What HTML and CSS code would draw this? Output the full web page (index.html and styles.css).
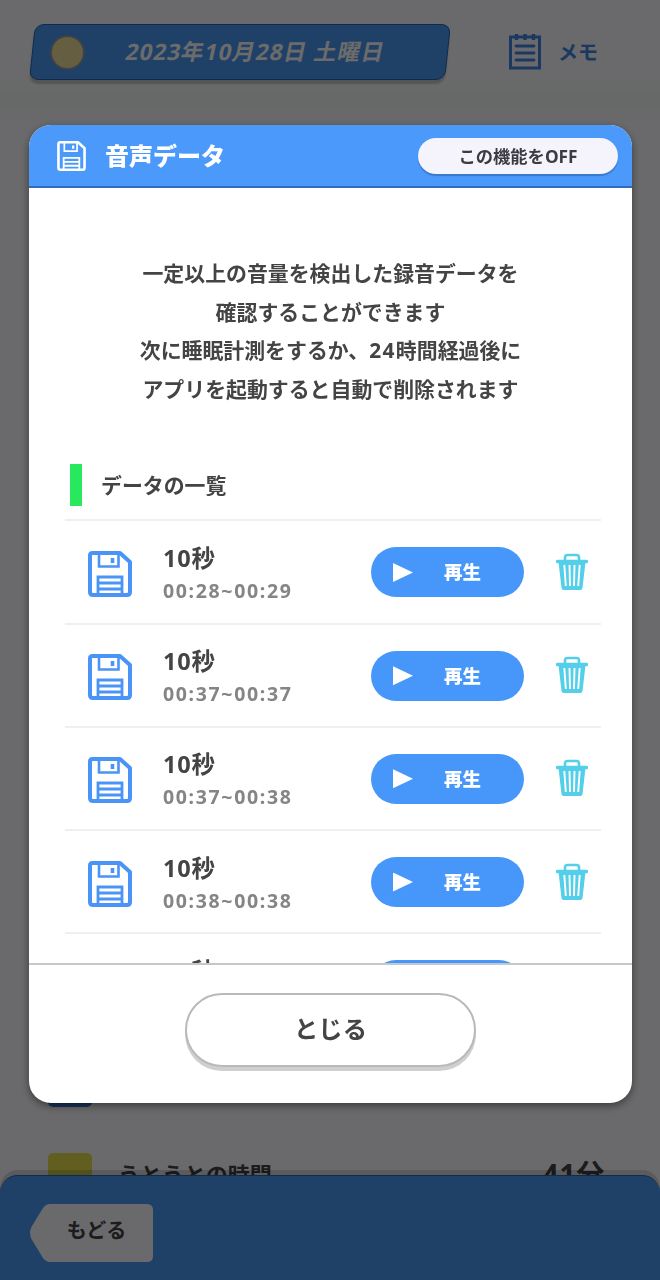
FILE: index.html
```html
<!DOCTYPE html>
<html lang="ja">
<head>
    <meta charset="UTF-8">
    <meta name="viewport" content="width=device-width, initial-scale=1.0">
    <title>音声データ</title>
    <link rel="stylesheet" href="styles.css">
</head>
<body>
    <svg class="symbols" aria-hidden="true">
        <symbol id="icon-floppy" viewBox="0 0 44 46">
            <path d="M4.500 2H32L42 11V41Q42 44 39 44H5Q2 44 2 41V4.500Q2 2 4.500 2Z" fill="none" stroke="currentColor" stroke-width="4" stroke-linejoin="round"/>
            <path d="M11 3V15.500H30.500V3" fill="none" stroke="currentColor" stroke-width="2.600"/>
            <path d="M24.500 7V12" stroke="currentColor" stroke-width="3.600"/>
            <path d="M10 43V26H34V43M10 32H34M10 38H34" fill="none" stroke="currentColor" stroke-width="2.800"/>
        </symbol>
        <symbol id="icon-trash" viewBox="0 0 32 38">
            <path d="M9 8V4.500Q9 2 11.500 2H20.500Q23 2 23 4.500V8" fill="none" stroke="currentColor" stroke-width="2.600"/>
            <path d="M1.500 8.500H30.500" stroke="currentColor" stroke-width="3.400" stroke-linecap="round"/>
            <path d="M2.500 9H29.500L26.500 35Q26.300 37 24.300 37H7.700Q5.700 37 5.500 35Z" fill="currentColor"/>
            <path d="M8.300 12L9.800 33M13.500 12L14 33M18.500 12L18 33M23.700 12L22.200 33" stroke="#fff" stroke-width="1.900"/>
        </symbol>
    </svg>

    <div class="screen">
        <header class="top-bar">
            <div class="date-plate">
                <span class="sun"></span>
                <span class="date">2023年10月28日 土曜日</span>
            </div>
            <div class="memo">
                <svg width="32" height="37" viewBox="0 0 32 37" fill="none" stroke="currentColor">
                    <path d="M1.500 4H30.500V35H1.500Z" stroke-width="3"/>
                    <path d="M7.500 1V7M16 1V7M24.500 1V7" stroke-width="3.400"/>
                    <path d="M7 13H25M7 20H25M7 27H25" stroke-width="2.800" stroke-linecap="round"/>
                </svg>
                <span>メモ</span>
            </div>
        </header>

        <main class="stats">
            <div class="stat-row">
                <span class="stat-mark blue"></span>
            </div>
            <div class="stat-row">
                <span class="stat-mark yellow"></span>
                <span class="stat-name">うとうとの時間</span>
                <span class="stat-value">41分</span>
            </div>
        </main>

        <footer class="bottom-bar">
            <button class="back-button">
                <svg width="125" height="60" viewBox="0 0 125 60">
                    <path d="M21 1H118Q124 1 124 7V53Q124 59 118 59H21Q17 59 14 55L3 37Q-1 30 3 23L14 5Q17 1 21 1Z" fill="currentColor"/>
                </svg>
                <span>もどる</span>
            </button>
        </footer>
    </div>

    <div class="overlay">
        <div class="modal" role="dialog">
            <div class="modal-header">
                <svg class="header-icon"><use href="#icon-floppy"/></svg>
                <h2>音声データ</h2>
                <button class="off-button">この機能をOFF</button>
            </div>

            <div class="modal-body">
                <p class="description">
                    一定以上の音量を検出した録音データを<br>
                    確認することができます<br>
                    次に睡眠計測をするか、<span class="num">24</span>時間経過後に<br>
                    アプリを起動すると自動で削除されます
                </p>

                <h3 class="list-title">データの一覧</h3>

                <ul class="data-list">
                    <li class="data-item">
                        <svg class="data-icon"><use href="#icon-floppy"/></svg>
                        <div class="data-info">
                            <div class="length">10秒</div>
                            <div class="time">00:28~00:29</div>
                        </div>
                        <button class="play-button"><i class="play-mark"></i><span>再生</span></button>
                        <svg class="trash-icon"><use href="#icon-trash"/></svg>
                    </li>
                    <li class="data-item">
                        <svg class="data-icon"><use href="#icon-floppy"/></svg>
                        <div class="data-info">
                            <div class="length">10秒</div>
                            <div class="time">00:37~00:37</div>
                        </div>
                        <button class="play-button"><i class="play-mark"></i><span>再生</span></button>
                        <svg class="trash-icon"><use href="#icon-trash"/></svg>
                    </li>
                    <li class="data-item">
                        <svg class="data-icon"><use href="#icon-floppy"/></svg>
                        <div class="data-info">
                            <div class="length">10秒</div>
                            <div class="time">00:37~00:38</div>
                        </div>
                        <button class="play-button"><i class="play-mark"></i><span>再生</span></button>
                        <svg class="trash-icon"><use href="#icon-trash"/></svg>
                    </li>
                    <li class="data-item">
                        <svg class="data-icon"><use href="#icon-floppy"/></svg>
                        <div class="data-info">
                            <div class="length">10秒</div>
                            <div class="time">00:38~00:38</div>
                        </div>
                        <button class="play-button"><i class="play-mark"></i><span>再生</span></button>
                        <svg class="trash-icon"><use href="#icon-trash"/></svg>
                    </li>
                    <li class="data-item">
                        <svg class="data-icon"><use href="#icon-floppy"/></svg>
                        <div class="data-info">
                            <div class="length">10秒</div>
                        </div>
                        <button class="play-button"><i class="play-mark"></i></button>
                        <svg class="trash-icon"><use href="#icon-trash"/></svg>
                    </li>
                </ul>
            </div>

            <div class="modal-footer">
                <button class="close-button">とじる</button>
            </div>
        </div>
    </div>
</body>
</html>
```

FILE: styles.css
```css
* {
    box-sizing: border-box;
}
body {
    margin: 0;
    font-family: "Noto Sans", "Noto Sans CJK JP", sans-serif;
    font-weight: bold;
    color: #444;
}
h2, h3, p, ul {
    margin: 0;
    padding: 0;
}
button {
    font: inherit;
    color: inherit;
    border: none;
    padding: 0;
    cursor: pointer;
}
svg {
    flex-shrink: 0;
}
.symbols {
    display: none;
}

/* 背面の画面 */
.screen {
    height: 1280px;
    display: flex;
    flex-direction: column;
    overflow: hidden;
    background: #fdfbff;
}
.top-bar {
    display: flex;
    align-items: flex-start;
    height: 125px;
    padding: 24px 0 0 32px;
    background: linear-gradient(#fdfbff 60%, #f4faf9 80%, #fdfbff 100%);
}
.date-plate {
    display: flex;
    align-items: center;
    width: 416px;
    height: 56px;
    padding-left: 19px;
    background: #4a99f5;
    border: 1px solid #2667b4;
    border-radius: 9px;
    box-shadow: 0 4px 2px #c8c8cc;
    transform: skewX(-6deg);
}
.sun {
    width: 31px;
    height: 31px;
    border-radius: 50%;
    background: #f2df9c;
    box-shadow: 0 0 3px 1px #c9a57a;
    transform: skewX(6deg);
}
.date {
    margin-left: 43px;
    font-size: 22.5px;
    line-height: 32px;
    letter-spacing: 1px;
    white-space: nowrap;
    transform: skewX(-6deg);
    color: #fff;
}
.memo {
    display: flex;
    align-items: center;
    gap: 17px;
    margin: 8px 0 0 61px;
    font-size: 20px;
    line-height: 37px;
    color: #4088e4;
}
.memo span {
    padding-top: 2px;
}
.stats {
    flex: 1;
    min-height: 0;
    padding: 937px 56px 0 48px;
    overflow: hidden;
}
.stat-row {
    display: flex;
    height: 91px;
}
.stat-mark {
    width: 44px;
    height: 45px;
    border-radius: 5px;
}
.stat-mark.blue {
    background: #3e78d6;
}
.stat-mark.yellow {
    background: #e7e04c;
}
.stat-name {
    margin: 6px 0 0 26px;
    font-size: 22px;
    line-height: 30px;
}
.stat-value {
    margin: 4px -1px 0 auto;
    font-size: 28px;
    line-height: 34px;
    letter-spacing: 0.8px;
}
.bottom-bar {
    height: 105px;
    padding: 27px 0 0 29px;
    background: #4a99f5;
    border-top: 1px solid #2667b4;
    border-radius: 18px 18px 0 0;
    box-shadow: 0 -5px 0 rgba(0,0,0,0.14);
}
.back-button {
    display: grid;
    place-items: center;
    background: none;
    font-size: 20px;
    line-height: 30px;
}
.back-button > * {
    grid-area: 1 / 1;
}
.back-button svg {
    color: #fdfbff;
}
.back-button span {
    padding: 0 0 4px 10px;
}

/* モーダル */
.overlay {
    position: fixed;
    inset: 0;
    padding: 125px 28px 0 29px;
    background: rgba(0,0,0,0.58);
}
.modal {
    display: flex;
    flex-direction: column;
    height: 978px;
    background: white;
    border-radius: 22px;
    overflow: hidden;
    box-shadow: 0 3px 8px rgba(0,0,0,0.45);
}
.modal-header {
    display: flex;
    align-items: center;
    height: 63px;
    padding: 0 14px 0 28px;
    background: #4a99fb;
    border-bottom: 2px solid #2f6cc0;
    color: white;
}
.header-icon {
    width: 29px;
    height: 30px;
}
.modal-header h2 {
    margin-left: 19px;
    font-size: 24px;
    font-weight: 900;
    line-height: 36px;
}
.off-button {
    width: 200px;
    height: 36px;
    margin-left: auto;
    padding-bottom: 1px;
    background: #f5f3fb;
    border-radius: 18px;
    box-shadow: 0 2px 1px #3979ca;
    font-size: 17.3px;
    color: #3c3c40;
}
.modal-body {
    height: 775px;
    padding: 66px 31px 0 36px;
    overflow: hidden;
}
.description {
    margin: 0 0 56px -5px;
    font-size: 20.9px;
    line-height: 38.6px;
    text-align: center;
    white-space: nowrap;
}
.num {
    letter-spacing: 1.4px;
}
.list-title {
    display: flex;
    align-items: center;
    height: 42px;
    margin: 0 0 13px 5px;
    padding: 0 0 3px 19px;
    border-left: 12px solid #28e95e;
    font-size: 20.9px;
}
.data-list {
    list-style: none;
    border-top: 2px solid #efefef;
}
.data-item {
    display: flex;
    align-items: center;
    height: 103.2px;
    padding: 0 13px 0 23px;
    border-bottom: 2px solid #efefef;
}
.data-icon {
    width: 44px;
    height: 46px;
    margin-top: 4px;
    color: #4a94f7;
}
.data-info {
    width: 208px;
    height: 68px;
    margin-left: 31px;
}
.length {
    font-size: 23.5px;
    line-height: 40px;
    letter-spacing: 0.8px;
}
.time {
    font-size: 19.5px;
    line-height: 25px;
    letter-spacing: 1.65px;
    color: #858585;
}
.play-button {
    display: flex;
    align-items: center;
    width: 153px;
    height: 50px;
    margin-top: 1px;
    padding-left: 22px;
    background: #4797fa;
    border-radius: 25px;
    font-size: 18.5px;
    font-weight: 900;
    color: white;
}
.play-button span {
    padding-bottom: 2px;
}
.play-mark {
    width: 20px;
    height: 19px;
    margin-right: 31px;
    background: white;
    clip-path: polygon(0 0, 100% 50%, 0 100%);
}
.trash-icon {
    width: 32px;
    height: 38px;
    margin-left: 32px;
    color: #53cfea;
}
.modal-footer {
    flex: 1;
    padding-top: 28px;
    border-top: 2px solid #c6c7c9;
    text-align: center;
}
.close-button {
    width: 291px;
    height: 74px;
    padding-bottom: 5px;
    background: white;
    border: 2px solid #b9b9b9;
    border-radius: 37px;
    box-shadow: 0 4px 0 #cfcfcf;
    font-size: 24.3px;
}
```
